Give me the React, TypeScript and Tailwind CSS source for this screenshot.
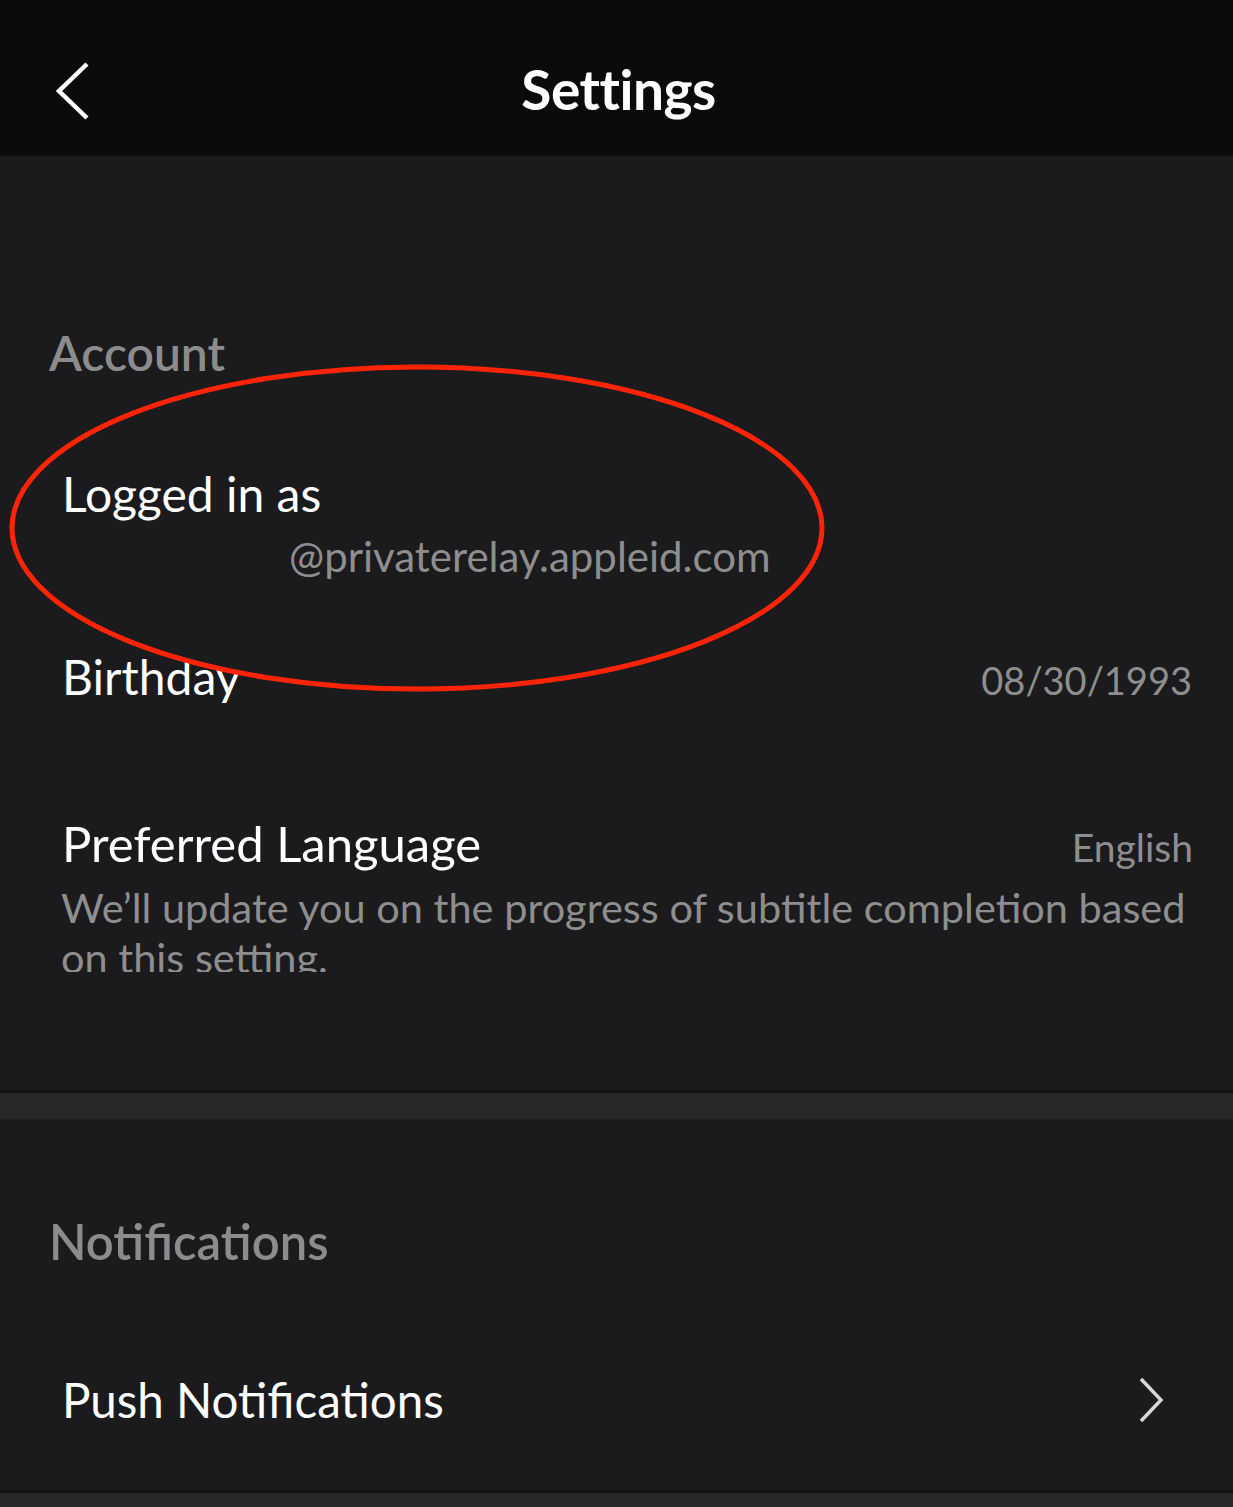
import React from 'react';

function BackIcon() {
  return (
    <svg width="40" height="60" viewBox="0 0 40 60" fill="none">
      <path d="M36 3 L8 30 L36 57" stroke="white" strokeWidth="4.5" />
    </svg>
  );
}

function ChevronRight() {
  return (
    <svg width="30" height="48" viewBox="0 0 30 48" fill="none">
      <path d="M4 3 L24 24 L4 45" stroke="#d8d8d8" strokeWidth="3.5" />
    </svg>
  );
}

export default function App() {
  return (
    <div className="w-[1233px] h-[1507px] overflow-hidden bg-[#1b1b1d] font-['Lato','Noto_Sans',sans-serif] text-white">
      {/* header */}
      <header className="relative h-[156px] bg-[#0b0b0b] flex items-center justify-center">
        <div className="absolute left-[51px] top-[61px]">
          <BackIcon />
        </div>
        <h1 className="text-[55px] leading-none font-bold tracking-[-0.5px] text-white mt-[22px] ml-[4px]">Settings</h1>
      </header>

      {/* account */}
      <section className="relative h-[934px] pt-[173px]">
        <h2 className="pl-[49px] text-[48px] leading-none font-semibold text-[#8c8c8c]">Account</h2>

        <div className="mt-[93px] pl-[62px]">
          <div className="text-[48px] leading-none">Logged in as</div>
          <div className="mt-[17px] pl-[227px] text-[42px] leading-none text-[#8e8e8e]">@privaterelay.appleid.com</div>
        </div>

        <div className="mt-[76px] pl-[62px] pr-[41px] flex items-baseline justify-between">
          <span className="text-[48px] leading-none">Birthday</span>
          <span className="text-[38px] leading-none text-[#8e8e8e]">08/30/1993</span>
        </div>

        <div className="mt-[118px] pl-[62px] pr-[40px]">
          <div className="flex items-baseline justify-between">
            <span className="text-[49px] leading-none">Preferred Language</span>
            <span className="text-[39px] leading-none text-[#8e8e8e]">English</span>
          </div>
          <p className="mt-[14px] h-[90px] overflow-hidden text-[41.5px] leading-[50px] text-[#8e8e8e] -ml-[1px]">
            We’ll update you on the progress of subtitle completion based on this setting.
          </p>
        </div>

        {/* annotation */}
        <svg className="absolute left-0 top-[205px] pointer-events-none" width="840" height="340" viewBox="0 0 840 340">
          <ellipse cx="417" cy="167" rx="405" ry="161" stroke="#ff2408" strokeWidth="5" fill="none" />
        </svg>
      </section>

      {/* divider */}
      <div className="h-[30px] bg-[#282828] border-t-[3px] border-[#111112] border-b border-b-[#1f1f1f]" />

      {/* notifications */}
      <section className="h-[373px] pt-[97px] border-b-[3px] border-[#111112]">
        <h2 className="pl-[49px] text-[49px] leading-none font-semibold text-[#8c8c8c]">Notifications</h2>
        <div className="mt-[110px] pl-[62px] pr-[66px] flex items-center justify-between">
          <span className="text-[47.5px] leading-none">Push Notifications</span>
          <ChevronRight />
        </div>
      </section>
      <div className="h-[20px] bg-[#282828]" />
    </div>
  );
}
